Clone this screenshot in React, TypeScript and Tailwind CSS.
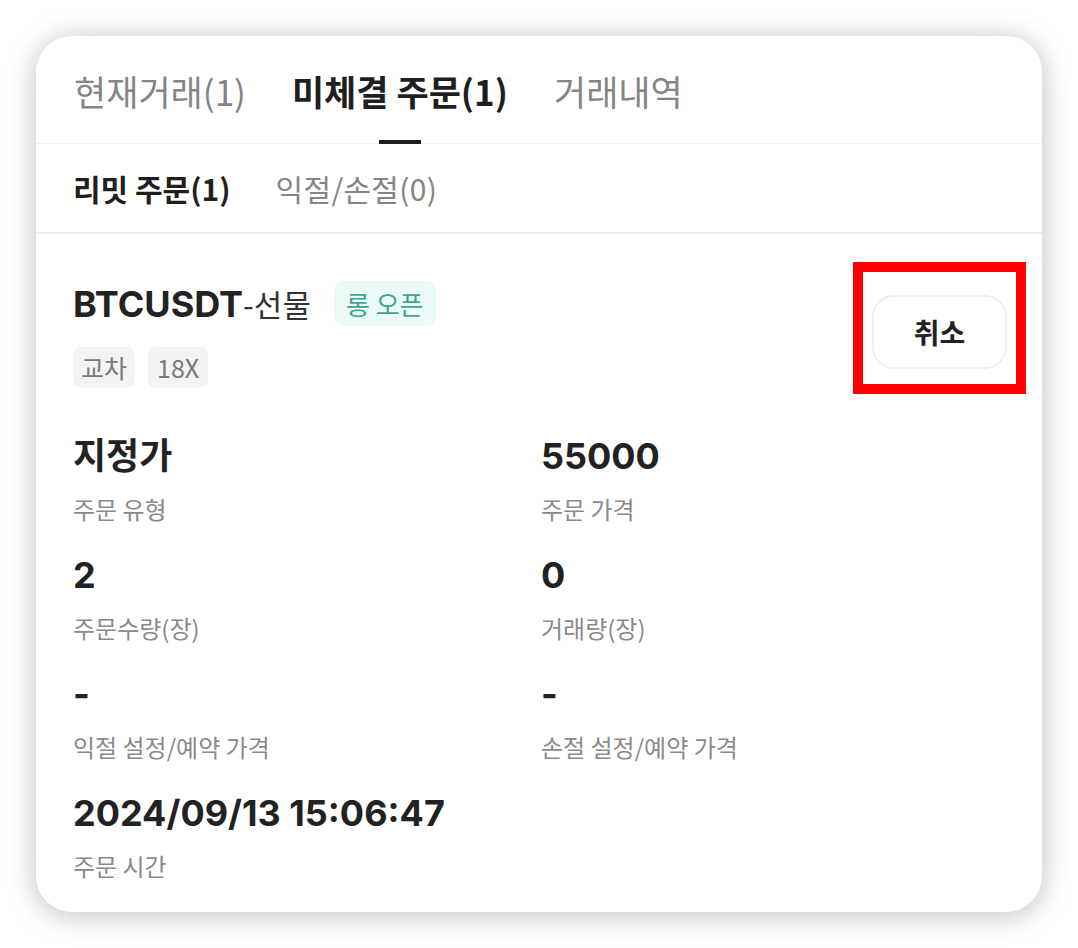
import React from "react";

const kr = "font-['Noto_Sans_CJK_KR',sans-serif]";
const num = "font-['Inter','Noto_Sans_CJK_KR',sans-serif]";

const fields = [
  { value: "지정가", label: "주문 유형" },
  { value: "55000", label: "주문 가격" },
  { value: "2", label: "주문수량(장)" },
  { value: "0", label: "거래량(장)" },
  { value: "-", label: "익절 설정/예약 가격" },
  { value: "-", label: "손절 설정/예약 가격" },
  { value: "2024/09/13 15:06:47", label: "주문 시간" },
];

function MainTabs() {
  const tabs = [
    { name: "현재거래(1)", active: false },
    { name: "미체결 주문(1)", active: true },
    { name: "거래내역", active: false },
  ];
  return (
    <div className="flex gap-[46px] px-[38px] pt-[32px] border-b border-[#f1f1f1]">
      {tabs.map((tab) => (
        <div
          key={tab.name}
          className={`relative pb-[29px] text-[35px] leading-[46px] ${kr} ${
            tab.active ? "font-bold text-[#1f1f1f]" : "text-[#858585]"
          }`}
        >
          {tab.name}
          {tab.active && (
            <span className="absolute left-1/2 -translate-x-1/2 -bottom-px w-[42px] h-[4px] bg-[#1f1f1f]" />
          )}
        </div>
      ))}
    </div>
  );
}

function SubTabs() {
  return (
    <div className={`flex gap-[45px] px-[37px] py-[24px] border-b-2 border-[#ececec] text-[30px] leading-[40px] ${kr}`}>
      <div className="font-bold text-[#1f1f1f]">리밋 주문(1)</div>
      <div className="text-[#858585] tracking-[0.3px]">익절/손절(0)</div>
    </div>
  );
}

export default function App() {
  return (
    <div className="w-[1078px] h-[948px] bg-white p-[36px]">
      <div className="h-full bg-white rounded-[36px] shadow-[0_3px_30px_rgba(0,0,0,0.26)] flex flex-col overflow-hidden">
        <MainTabs />
        <SubTabs />

        <div className="pl-[37px] pr-[35px] pt-[47px] pb-[30px]">
          {/* Header */}
          <div className="flex justify-between items-start">
            <div className="flex flex-col gap-[21px]">
              <div className="flex items-center gap-[23px] h-[45px]">
                <div className="flex items-baseline text-[#222] leading-[45px]">
                  <span className={`text-[36px] font-bold ${num}`}>BTCUSDT</span>
                  <span className={`text-[31px] ${kr} text-[#333]`}>-선물</span>
                </div>
                <span
                  className={`h-[45px] px-[12px] flex items-center rounded-[10px] bg-[#eafaf7] text-[#3ea594] text-[26px] ${kr}`}
                >
                  롱 오픈
                </span>
              </div>
              <div className={`flex gap-[13px] text-[25px] text-[#7a7a7a] ${kr}`}>
                <span className="h-[41px] px-[8px] flex items-center rounded-[8px] bg-[#f3f3f3]">교차</span>
                <span className="h-[41px] px-[9px] flex items-center rounded-[8px] bg-[#f3f3f3]">18X</span>
              </div>
            </div>

            <div className="relative mt-[14px]">
              <button
                className={`w-[135px] h-[74px] border-2 border-[#efefef] rounded-[22px] bg-white text-[28px] font-bold text-[#222] ${kr}`}
              >
                취소
              </button>
              <span className="absolute -left-[19px] -right-[19px] -top-[33px] -bottom-[25px] border-[10px] border-[#ff0000] pointer-events-none" />
            </div>
          </div>

          {/* Details */}
          <div className="mt-[46px] grid grid-cols-[468px_1fr] gap-y-[28px]">
            {fields.map((f, i) => (
              <div key={i} className="flex flex-col gap-[15px]">
                <div className={`text-[36px] leading-[44px] font-bold text-[#222] ${num}`}>{f.value}</div>
                <div className={`text-[24px] leading-[32px] text-[#8a8a8a] ${kr}`}>{f.label}</div>
              </div>
            ))}
          </div>
        </div>
      </div>
    </div>
  );
}
